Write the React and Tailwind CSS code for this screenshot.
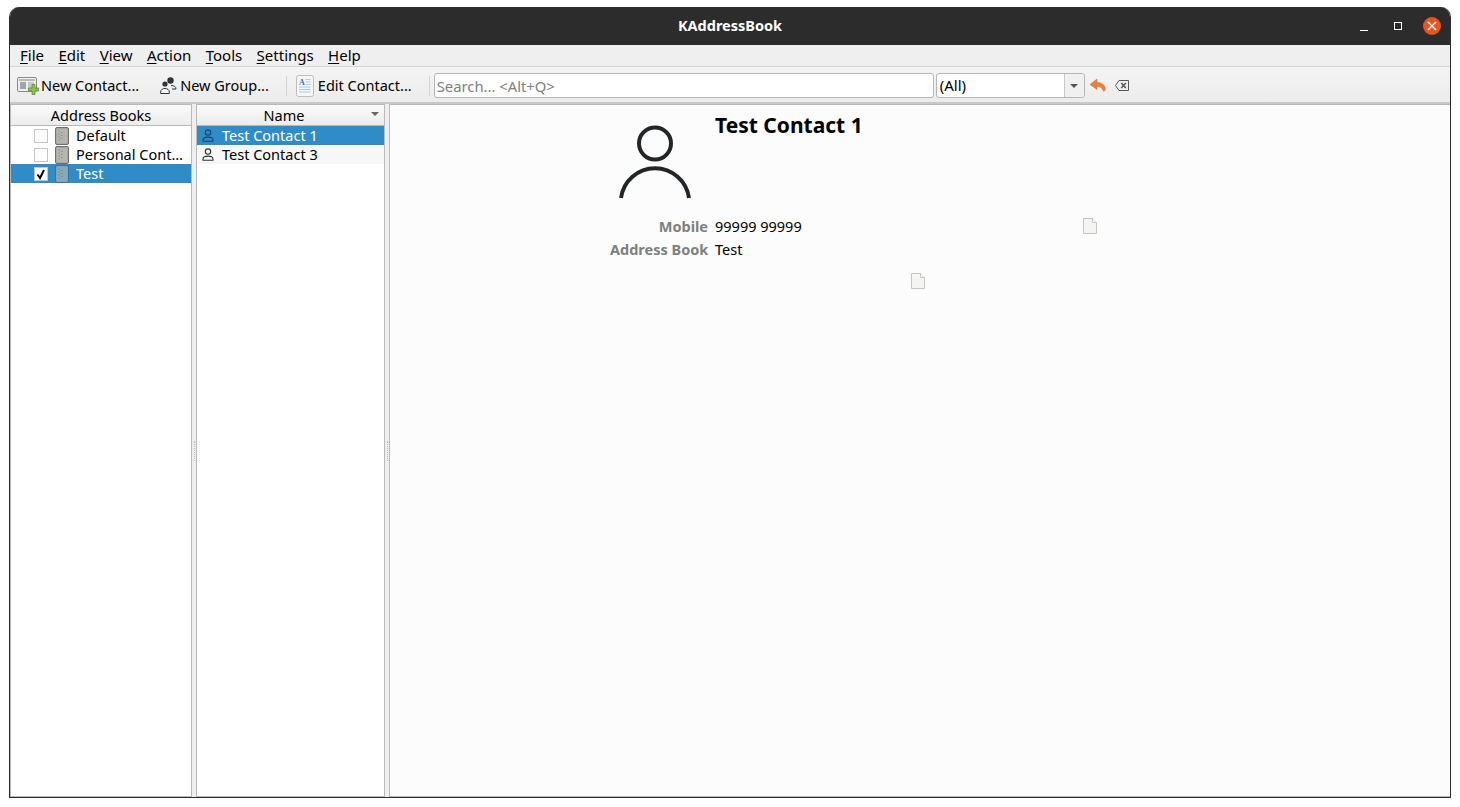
import { useState } from "react";

const menus = [
    ["F", "ile"],
    ["E", "dit"],
    ["V", "iew"],
    ["A", "ction"],
    ["T", "ools"],
    ["S", "ettings"],
    ["H", "elp"],
];

const AddressBookIcon = ({ selected }) => (
    <svg width="14" height="18" viewBox="0 0 14 18">
        <rect x="0.5" y="0.5" width="13" height="17" rx="1.500" fill={selected ? "#7fa3b8" : "#a9a9a6"} stroke={selected ? "#3f7396" : "#6f6f6d"} />
        <rect x="2" y="2" width="10" height="14" rx="1" fill={selected ? "#86a9be" : "#b4b4b1"} />
        <path d="M3.500 4h1.500M3.500 7h1.500M3.500 10h1.500M3.500 13h1.500M6 5.500h1.500M6 8.500h1.500M6 11.500h1.500" stroke={selected ? "#4f9f86" : "#7f9f68"} strokeWidth="1" />
    </svg>
);

const PersonSmall = ({ color }) => (
    <svg width="12" height="13" viewBox="0 0 12 13" fill="none" stroke={color} strokeWidth="1.1">
        <circle cx="6" cy="3.600" r="2.700" />
        <path d="M1 12.300v-1.200c0-2 2-3 5-3s5 1 5 3v1.200z" />
    </svg>
);

const NewContactIcon = () => (
    <svg width="22" height="20" viewBox="0 0 22 20">
        <rect x="0.5" y="1.500" width="19" height="14" rx="1.500" fill="#eeeeec" stroke="#8a8a88" />
        <rect x="2" y="3" width="16" height="2" fill="#b9b9b7" />
        <rect x="3" y="6" width="6" height="7" fill="#a5a5a3" />
        <path d="M11 7h6M11 9h6M11 11h4" stroke="#a0a09e" />
        <path d="M15 8.500h3v3.500h3.500v3H18v3.500h-3V15h-3.500v-3H15z" fill="#8fc04f" stroke="#5f8f2f" strokeWidth="0.8" />
    </svg>
);

const NewGroupIcon = () => (
    <svg width="17" height="18" viewBox="0 0 17 18">
        <circle cx="10.500" cy="3.500" r="3.200" fill="#2e3436" />
        <path d="M11 8.500c3 0 5 1.200 5 3.500h-4" fill="none" stroke="#2e3436" />
        <circle cx="5" cy="7" r="2.600" fill="#2e3436" />
        <path d="M0.700 16.500v-1.500c0-2.300 2-3.500 4.300-3.500s4.300 1.200 4.300 3.500v1.500z" fill="#fff" stroke="#2e3436" />
    </svg>
);

const EditContactIcon = () => (
    <svg width="18" height="22" viewBox="0 0 18 22">
        <rect x="0.5" y="0.5" width="17" height="21" rx="2" fill="#f6f6f4" stroke="#bdbdbb" />
        <text x="3" y="10" fontSize="8" fontWeight="700" fill="#3a6fb0" fontFamily="'Liberation Serif', serif">A</text>
        <path d="M9.500 4.500h5M9.500 7h5M9.500 9.500h5M3 12h11.500M3 14.500h11.500M3 17h11.500" stroke="#a8cbe8" />
    </svg>
);

const ReplyIcon = () => (
    <svg width="17" height="15" viewBox="0 0 17 15">
        <path d="M8 1L1 6.500 8 11.500V8.500c3 0 5 1 6.500 4.800 1.200-.3 1.800-1 1.800-2.300C16.300 7 12.500 4.500 8 4.500z" fill="#e8803c" stroke="#cf6a28" strokeWidth="0.5" />
    </svg>
);

const ClearIcon = () => (
    <svg width="14" height="11" viewBox="0 0 14 11" fill="none" stroke="#555753">
        <path d="M4 .5h9.500v10H4L.5 5.500z" fill="#eeeeec" />
        <path d="M6.300 3l4.500 5M10.800 3L6.300 8" strokeWidth="1.500" />
    </svg>
);

const DocIcon = () => (
    <svg width="14" height="16" viewBox="0 0 14 16">
        <path d="M.5.500h9l4 4v11H.500z" fill="#f4f4f3" stroke="#c4c4c2" />
        <path d="M9.500.500v4h4" fill="#fff" stroke="#c4c4c2" />
    </svg>
);

const HeaderCell = ({ children, arrow }) => (
    <div className={"relative h-[21px] pt-px shrink-0 flex items-center justify-center border-b border-[#b9b9b9] bg-gradient-to-b from-[#fafafa] to-[#ececec] " + (arrow ? "pr-[13px]" : "")}>
        {children}
        {arrow && <span className="absolute right-[5px] top-[7px] w-0 h-0 border-x-[4px] border-x-transparent border-t-[4px] border-t-[#666]"></span>}
    </div>
);

const BookRow = ({ name, checked, selected }) => (
    <div className={"h-[19px] flex items-center pl-[23px] " + (selected ? "bg-[#308cc6] text-white" : "")}>
        <span className="w-[14px] h-[14px] border border-[#c4c4c4] bg-white flex items-center justify-center shrink-0">
            {checked && (
                <svg width="12" height="12" viewBox="0 0 12 12" fill="none" stroke="#000" strokeWidth="2"><path d="M2.500 6.500l2.500 3.500 4-8" /></svg>
            )}
        </span>
        <span className="ml-[7px] mr-[7px] shrink-0 flex"><AddressBookIcon selected={selected} /></span>
        <span className="whitespace-nowrap">{name}</span>
    </div>
);

const ContactRow = ({ name, selected }) => (
    <div className={"h-[19px] flex items-center pl-[5px] " + (selected ? "bg-[#308cc6] text-white" : "bg-[#f7f7f7]")}>
        <PersonSmall color={selected ? "#12456a" : "#2e3436"} />
        <span className="ml-[8px] whitespace-nowrap">{name}</span>
    </div>
);

const Splitter = () => (
    <div className="w-[4px] shrink-0 bg-[#efefef] flex flex-col items-center justify-center">
        <span className="w-[1px] h-[20px] border-l border-dotted border-[#bbb]"></span>
    </div>
);

const App = () => {
    const [books] = useState([
        { name: "Default" },
        { name: "Personal Cont…" },
        { name: "Test", checked: true, selected: true },
    ]);

    return (
        <div className="w-[1460px] h-[807px] bg-white pt-[7px] pl-[9px] pr-[9px] pb-[9px] font-['Noto_Sans',sans-serif] text-[14.500px] text-[#000] overflow-hidden">
            <div className="h-full flex flex-col rounded-t-[10px] overflow-hidden border-x border-b border-[#2c2c2c] bg-[#efefef]">
                {/* title bar */}
                <div className="relative h-[38px] shrink-0 -mx-px bg-[#2c2c2c] flex items-center justify-center">
                    <span className="text-white font-bold text-[14.500px]">KAddressBook</span>
                    <div className="absolute right-[10px] top-[10px] flex items-center">
                        <span className="w-[8px] h-[1px] bg-white mr-[26px] mt-[9px]"></span>
                        <span className="w-[8px] h-[8px] border border-white mr-[21px]"></span>
                        <span className="w-[18px] h-[18px] rounded-full bg-[#e95420] flex items-center justify-center">
                            <svg width="10" height="10" viewBox="0 0 10 10" stroke="#fff" strokeWidth="1.400"><path d="M1 1l8 8M9 1l-8 8" /></svg>
                        </span>
                    </div>
                </div>

                {/* menu bar */}
                <div className="h-[22px] shrink-0 flex items-center pl-[10px] gap-[14.400px] border-b border-[#d6d6d6] bg-[#efefef] text-[15px]">
                    {menus.map(([key, rest]) => (
                        <span key={key}><span className="underline underline-offset-2">{key}</span>{rest}</span>
                    ))}
                </div>

                {/* toolbar */}
                <div className="h-[37px] pt-[2px] shrink-0 flex items-center pl-[7px] border-b-2 border-[#c8c8c8] bg-gradient-to-b from-[#f4f4f4] to-[#ececec]">
                    <NewContactIcon />
                    <span className="ml-[2px] whitespace-nowrap">New Contact...</span>
                    <span className="ml-[21px]"><NewGroupIcon /></span>
                    <span className="ml-[3px] whitespace-nowrap">New Group...</span>
                    <span className="w-px h-[20px] bg-[#d4d4d4] ml-[17px] mr-[9px]"></span>
                    <EditContactIcon />
                    <span className="ml-[4px] whitespace-nowrap">Edit Contact...</span>
                    <span className="w-px h-[20px] bg-[#d4d4d4] ml-[17px] mr-[4px]"></span>
                    <input
                        readOnly
                        placeholder="Search... <Alt+Q>"
                        className="w-[500px] h-[25px] rounded-[3px] border border-[#b5b5b5] bg-white pl-[2px] outline-none text-[14.800px] placeholder:text-[#808080]"
                    />
                    <div className="ml-[2px] w-[149px] h-[25px] rounded-[3px] border border-[#b5b5b5] bg-white flex items-center">
                        <span className="pl-[3px] flex-1 text-[15px]">(All)</span>
                        <span className="w-[20px] h-full border-l border-[#c8c8c8] bg-[#f0f0f0] rounded-r-[3px] flex items-center justify-center">
                            <span className="w-0 h-0 border-x-[4px] border-x-transparent border-t-[4px] border-t-[#555]"></span>
                        </span>
                    </div>
                    <span className="ml-[4px] flex"><ReplyIcon /></span>
                    <span className="ml-[9px] flex"><ClearIcon /></span>
                </div>

                {/* panels */}
                <div className="flex-1 min-h-0 flex bg-[#efefef]">
                    <div className="w-[182px] shrink-0 flex flex-col border border-[#b9b9b9] bg-white">
                        <HeaderCell>Address Books</HeaderCell>
                        {books.map((book) => (
                            <BookRow key={book.name} {...book} />
                        ))}
                    </div>
                    <Splitter />
                    <div className="w-[189px] shrink-0 flex flex-col border border-[#b9b9b9] bg-white">
                        <HeaderCell arrow>Name</HeaderCell>
                        <ContactRow name="Test Contact 1" selected />
                        <ContactRow name="Test Contact 3" />
                    </div>
                    <Splitter />
                    <div className="flex-1 min-w-0 relative border-l border-t border-b border-[#b9b9b9] bg-[#fcfcfc]">
                        <div className="ml-[220px] mt-[8px] flex flex-col w-[500px]">
                            <div className="flex">
                                <svg width="80" height="80" viewBox="0 0 80 80" fill="none" stroke="#232629" strokeWidth="4" className="ml-[5px] mt-[12px] shrink-0">
                                    <circle cx="40" cy="18.500" r="16" />
                                    <path d="M6 73 A34.300 34.300 0 0 1 74 73" />
                                </svg>
                                <div className="ml-[20px] text-[21px] font-bold leading-[24px]">Test Contact 1</div>
                            </div>
                        </div>
                        <div className="ml-[220px] mt-[10px] leading-[23px]">
                            <div className="flex">
                                <span className="w-[98px] text-right font-bold text-[#7f7f7f] whitespace-nowrap">Mobile</span>
                                <span className="ml-[7px]">99999 99999</span>
                            </div>
                            <div className="flex">
                                <span className="w-[98px] text-right font-bold text-[#7f7f7f] whitespace-nowrap">Address Book</span>
                                <span className="ml-[7px]">Test</span>
                            </div>
                        </div>
                        <span className="absolute left-[693px] top-[113px] flex"><DocIcon /></span>
                        <span className="absolute left-[521px] top-[168px] flex"><DocIcon /></span>
                    </div>
                </div>
            </div>
        </div>
    );
};

export default App;
